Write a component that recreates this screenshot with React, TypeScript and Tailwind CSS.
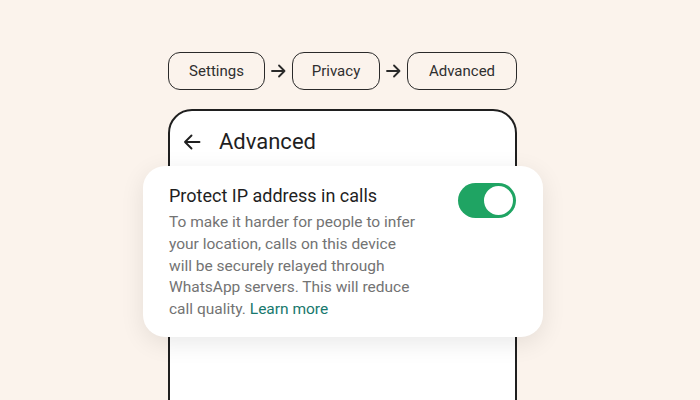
import React from "react";

function Arrow() {
  return (
    <svg width="15" height="14" viewBox="0 0 15 14" fill="none" className="shrink-0">
      <path d="M1 7H13.5M8 1.5L13.5 7L8 12.5" stroke="#2a2a2a" strokeWidth="1.8" strokeLinecap="round" strokeLinejoin="round" />
    </svg>
  );
}

function Pill({ label, w }: { label: string; w: string }) {
  return (
    <div className={`h-[38px] ${w} rounded-[12px] border-[1.5px] border-[#2a2a2a] flex items-center justify-center text-[15px] text-[#2f2f2f]`}>
      {label}
    </div>
  );
}

export default function App() {
  return (
    <div
      className="w-[700px] h-[400px] bg-[#fbf3ec] overflow-hidden pl-[168px] pt-[52px]"
      style={{ fontFamily: "Roboto, 'Noto Sans', sans-serif" }}
    >
      <div className="flex items-center gap-[6px]">
        <Pill label="Settings" w="w-[97px]" />
        <Arrow />
        <Pill label="Privacy" w="w-[88px]" />
        <Arrow />
        <Pill label="Advanced" w="w-[110px]" />
      </div>

      <div className="mt-[19px] w-[349px] h-[400px] bg-white border-2 border-[#1f1f1f] rounded-t-[24px]">
        <div className="h-[55px] flex items-center pl-[13px] pt-[6px]">
          <svg width="18" height="16" viewBox="0 0 18 16" fill="none">
            <path d="M16.5 8H2M8.5 1.5L2 8L8.5 14.5" stroke="#1f1f1f" strokeWidth="1.9" strokeLinecap="round" strokeLinejoin="round" />
          </svg>
          <span className="ml-[18px] text-[22px] text-[#1f1f1f]">Advanced</span>
        </div>

        <div className="ml-[-27px] w-[400px] bg-white rounded-[22px] shadow-[0_6px_24px_rgba(0,0,0,0.09)] flex justify-between pl-[26px] pr-[27px] pt-[18px] pb-[16px]">
          <div>
            <div className="text-[18px] leading-[24px] text-[#1f1f1f]">Protect IP address in calls</div>
            <div className="mt-[4px] text-[15.5px] leading-[21.75px] text-[#737373] whitespace-nowrap">
              <div>To make it harder for people to infer</div>
              <div>your location, calls on this device</div>
              <div>will be securely relayed through</div>
              <div>WhatsApp servers. This will reduce</div>
              <div>
                call quality. <span className="text-[#17786d]">Learn more</span>
              </div>
            </div>
          </div>
          <div className="mt-[-1px] w-[58px] h-[35px] rounded-full bg-[#1fa463] flex items-center justify-end pr-[3px] shrink-0">
            <div className="w-[29px] h-[29px] rounded-full bg-white" />
          </div>
        </div>
      </div>
    </div>
  );
}
